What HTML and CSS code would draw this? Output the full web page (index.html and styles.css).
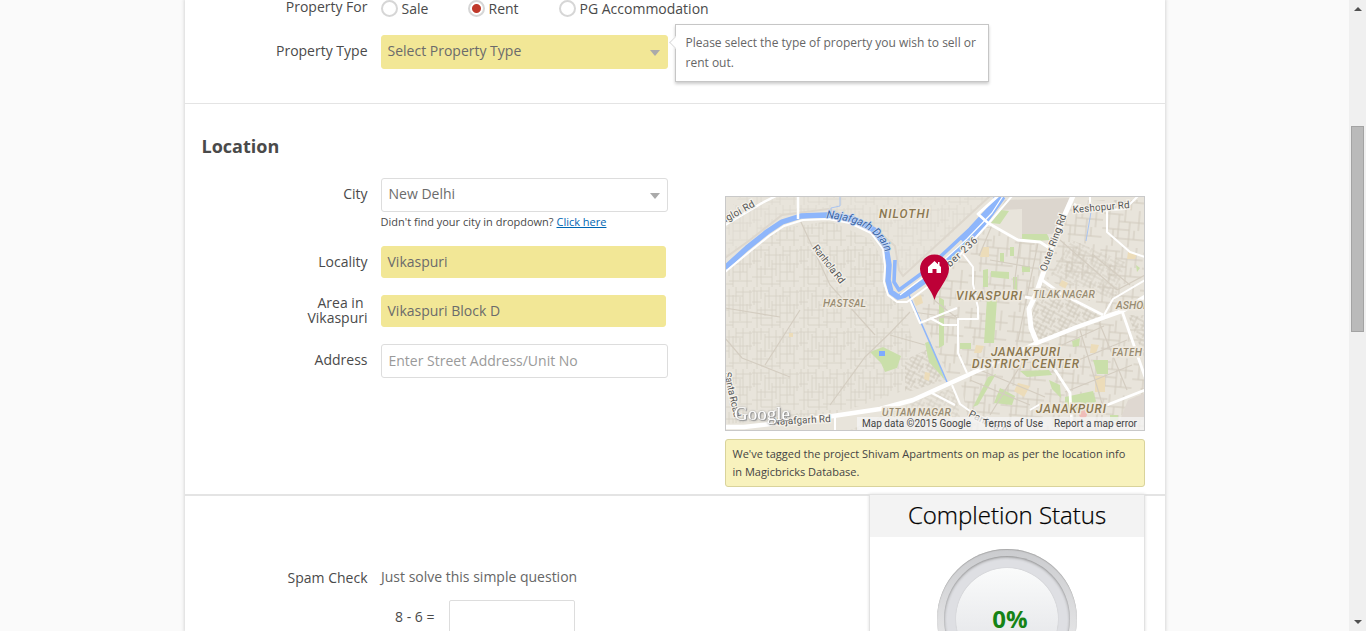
FILE: index.html
```html
<!DOCTYPE html>
<html lang="en">
<head>
<meta charset="utf-8">
<title>Post Property</title>
<link rel="stylesheet" href="styles.css">
</head>
<body>
<div class="viewport">
  <main class="page">
    <div class="card">
      <section class="section section-property">
        <div class="row row-for">
          <span class="label">Property For</span>
          <div class="radios">
            <span class="option option-sale"><i class="radio"></i>Sale</span>
            <span class="option option-rent"><i class="radio checked"></i>Rent</span>
            <span class="option"><i class="radio"></i>PG Accommodation</span>
          </div>
        </div>
        <div class="row row-type">
          <span class="label">Property Type</span>
          <div class="field select filled">Select Property Type<i class="caret"></i></div>
          <div class="tooltip">Please select the type of property you wish to sell or<br>rent out.</div>
        </div>
      </section>

      <section class="section section-location">
        <div class="form">
          <h2>Location</h2>
          <div class="row"><span class="label">City</span><div class="field select">New Delhi<i class="caret"></i></div></div>
          <p class="hint">Didn't find your city in dropdown? <a>Click here</a></p>
          <div class="row row-locality"><span class="label">Locality</span><div class="field filled short">Vikaspuri</div></div>
          <div class="row row-area"><span class="label label-two"><span class="first">Area in</span>Vikaspuri</span><div class="field filled short">Vikaspuri Block D</div></div>
          <div class="row row-address"><span class="label">Address</span><div class="field placeholder">Enter Street Address/Unit No</div></div>
        </div>
        <div class="map-column">
          <svg class="map" viewBox="725 196 420 235" width="420" height="235">
            <defs>
              <pattern id="lanes" width="47" height="41" patternUnits="userSpaceOnUse">
                <path d="M2 0V18M5 4V41M9 0V12M9 20V38M13 6V29M17 0V21M20 14V41M24 2V30M28 8V41M31 0V15M35 10V34M38 0V26M42 17V41M45 3V22M0 4H17M13 9H38M0 15H9M20 18H47M5 23H24M28 26H42M0 31H20M24 35H47M9 38H28M31 5H47" fill="none" stroke="#d6d0c5" stroke-width=".8"/>
              </pattern>
              <pattern id="blocks" width="43" height="37" patternUnits="userSpaceOnUse" patternTransform="rotate(5)">
                <path d="M0 5H20M16 12H43M0 20H27M9 29H43M6 0V20M16 5V29M27 12V37M36 0V20M11 20V37M32 20V29M22 0V12" fill="none" stroke="#d0c9bc" stroke-width="1"/>
              </pattern>
              <pattern id="dense" width="19" height="17" patternUnits="userSpaceOnUse" patternTransform="rotate(28)">
                <path d="M0 2H19M0 6H12M4 10H19M0 14H15M3 0V10M8 2V17M13 0V14M17 6V17" fill="none" stroke="#cbc4b7" stroke-width=".9"/>
              </pattern>
            </defs>
            <rect x="725" y="196" width="420" height="235" fill="#e8e4db"/>
            <path d="M725 272L748 252L782 228L830 221L872 240L885 265L886 292L902 304L913 340L900 392L836 414L725 424Z" fill="url(#lanes)"/>
            <path d="M740 196H990L940 245L900 275L897 245L865 219L820 209L780 216L725 258V215Z" fill="url(#lanes)" opacity=".6"/>
            <path d="M915 300L985 226L1050 245L1030 300L1035 342L950 380Z" fill="url(#blocks)"/>
            <path d="M960 378L1035 345L1120 314L1145 375V431H970Z" fill="url(#blocks)"/>
            <path d="M1075 200H1145V300L1110 312L1045 278L1060 230Z" fill="url(#blocks)"/>
            <path d="M1042 282L1105 315L1039 341L1030 320Z" fill="url(#dense)"/>
            <path d="M1072 240L1125 262L1115 300L1050 275Z" fill="url(#dense)" opacity=".7"/>
            <path d="M905 360L930 348L945 380L905 393Z" fill="url(#dense)"/>
            <path d="M1128 315H1145V360Z" fill="url(#dense)"/>
            <path d="M850 430L935 393L955 388L962 430Z" fill="url(#dense)" opacity=".7"/>
            <path d="M1005 200L1070 198L1059 234H1022V209L1000 210Z" fill="#dcd6ce"/>
            <path d="M1128 400L1145 393V420H1120Z" fill="#dfd8d1"/>
            <g fill="#cadfaa">
              <path d="M1001 210L1009 211L1000 224L991 223ZM1022 234H1047L1050 240L1022 242ZM983 270L988 269V287H983ZM991 271L1009 272V279L991 277ZM1010 247H1014V256H1010ZM1022 266H1030V272H1022ZM1013 277H1017V292H1013ZM1000 253H1004V262H1000ZM987 298L997 299L994 343H984ZM939 297L944 300V345L939 348ZM960 343H971V349H960ZM1136 265L1140 268L1137 272ZM870 352L883 347L901 356L897 368L885 372L881 363Z"/>
              <path d="M925 343L930 341L945 380L929 362ZM988 377L996 374L978 405L973 407ZM1000 388L1015 396L1012 405L994 403ZM1020 371L1049 370L1052 375L1027 377ZM1065 397L1093 391L1096 401L1090 414H1065ZM1072 341L1080 338L1079 346L1073 347ZM1093 360H1108V374H1097ZM1049 380L1060 385L1061 398L1052 389ZM1110 415H1118V421H1110Z"/>
            </g>
            <g fill="#ecdcb9">
              <path d="M982 247H989V257H980ZM1062 280L1068 283L1065 289L1059 285ZM1128 252L1137 254L1135 259H1127ZM913 298L921 295L923 303L916 306ZM1018 383L1030 386L1024 397L1014 391ZM1095 376H1105V392H1095ZM1091 344L1099 345L1096 353H1090ZM976 345L984 346L981 353H974ZM925 372L930 373L929 381L924 379ZM789 333H793V337H789Z"/>
            </g>
            <g fill="none" stroke="#d4cdc1" stroke-width="1.2">
              <path d="M725 338L742 358L790 377M800 220L830 285L875 335M765 365L800 310M830 405L865 357L890 333L910 312M725 308L780 317M890 335L925 345M913 312L955 318M934 300L957 318M925 320L958 315M990 260L1030 267M992 225L979 256M1020 242L1012 300M1038 243L1018 340M1060 240L1117 290M1092 254L1130 285M1117 290L1145 275"/>
              <path d="M1042 354L1104 326M1052 371L1127 340M1065 392L1132 365M1080 330L1104 410M1099 322L1127 390M1130 330H1145M1130 340H1145M1136 350H1145M970 380L1030 405M980 370L1045 397M1030 350L990 415"/>
              <path d="M725 258L750 240L782 215L828 209L870 224L895 246L899 270L903 276L990 196" stroke="#ddd7cd" stroke-width="2"/>
            </g>
            <g fill="none" stroke="#8eb6fb" stroke-linejoin="round">
              <path d="M725 268L747 248L767 232L782 222L801 216L827 215L853 219L874 230L886 247L889 265L888 280L891 292L898 297L905 295L929 278L975 234L1002 196" stroke-width="5.5"/>
              <path d="M895 260L894 282L899 290L925 271L970 229L993 204L996 196" stroke-width="3.6"/>
              <path d="M1002 196L982 224L963 242" stroke-width="8"/>
              <path d="M909 295L947 382" stroke-width="1.6"/>
              <path d="M831 217V208L840 206V196M1090 196L1091 212L1086 241" stroke-width="1" opacity=".7"/>
            </g>
            <g fill="none" stroke="#fff" stroke-linejoin="round">
              <path d="M725 272L748 253L769 236L784 226L803 220L828 219L850 223L871 233L883 249L885 267L884 282L888 295L897 302L907 302L937 280L988 224L1012 196" stroke-width="2"/>
              <path d="M900 295L933 270L967 239L992 213L1003 196" stroke-width="1.2"/>
              <path d="M725 225L762 203L776 196M798 196V219" stroke-width="2.5"/>
              <path d="M725 427H744L787 422L833 416L880 409L913 400L935 390L957 380L990 365L1037 343L1077 327L1122 311L1145 297" stroke-width="4.5"/>
              <path d="M1073 196L1062 221L1053 242L1044 271L1036 294L1029 309L1031 328L1037 343" stroke-width="5"/>
              <path d="M998 196L978 214L988 223L1018 240L1040 242L1051 249M1103 315L1060 293L1042 280M1122 311L1145 377M1107 405L1145 390M1047 358L1057 373L1070 393L1072 431M1025 297L1036 299" stroke-width="2.8"/>
              <path d="M952 385L960 404L977 416L1008 431M910 300L920 323L957 308M963 254L973 267V284L978 308V319H958V353L967 373M930 318L943 325H958M1074 204L1090 211L1125 209L1138 196M1107 211V232L1130 252L1145 257M1104 315L1113 299L1145 280M1090 196V205M930 392L955 405M835 415V431M1030 410L1042 403" stroke-width="2"/>
            </g>
            <rect x="879" y="351" width="6" height="5" fill="#7eaaff"/>
            <circle cx="1083" cy="414" r="4" fill="#efbdb8"/>
            <g class="place">
              <text x="879" y="218" textLength="50">NILOTHI</text>
              <text x="956" y="300" textLength="66">VIKASPURI</text>
              <text x="991" y="355.500" textLength="69">JANAKPURI</text>
              <text x="972" y="367.500" textLength="107">DISTRICT CENTER</text>
              <text x="1036" y="412.500" textLength="70">JANAKPURI</text>
            </g>
            <g class="place minor">
              <text x="823" y="307" textLength="43">HASTSAL</text>
              <text x="1033" y="298" textLength="62">TILAK NAGAR</text>
              <text x="1116" y="309">ASHOK</text>
              <text x="1112" y="356" textLength="30">FATEH</text>
              <text x="882" y="416" textLength="69">UTTAM NAGAR</text>
            </g>
            <g class="road">
              <text transform="translate(723 224) rotate(-29)" textLength="37">ngloi Rd</text>
              <text transform="translate(812 248) rotate(52)" textLength="46">Ranhola Rd</text>
              <text transform="translate(1046 272) rotate(-70)" textLength="60">Outer Ring Rd</text>
              <text transform="translate(1073 213) rotate(-5)" textLength="57">Keshopur Rd</text>
              <text transform="translate(943 274) rotate(-43)" textLength="48">mber 236</text>
              <text transform="translate(773 425) rotate(-3)" textLength="58">Najafgarh Rd</text>
              <text transform="translate(724 373) rotate(77)" textLength="46">Santa Road</text>
              <text transform="translate(968 416) rotate(27)">Pankha R</text>
            </g>
            <path id="drain" d="M826 218Q878 222 886 255" fill="none"/>
            <text class="drain"><textPath href="#drain" textLength="73">Najafgarh Drain</textPath></text>
            <text class="brand" x="734" y="420" textLength="56">Google</text>
            <path d="M934.500 300C932 290 920 279 920 269A14.500 14.500 0 0 1 949 269C949 279 937 290 934.500 300Z" fill="#bd0037"/>
            <path d="M934.500 261L928 267V273H932.500V269H936.500V273H941V267L939.500 265.600V262H938V264.200Z" fill="#fff"/>
            <rect x="857" y="417" width="288" height="14" fill="#f5f5f5" opacity=".76"/>
            <g class="legal">
              <text x="862" y="427" textLength="109">Map data ©2015 Google</text>
              <text x="983" y="427" textLength="60">Terms of Use</text>
              <text x="1054" y="427" textLength="83">Report a map error</text>
            </g>
            <rect x="725.500" y="196.500" width="419" height="234" fill="none" stroke="#c9c9c9"/>
          </svg>
          <div class="notice">We've tagged the project Shivam Apartments on map as per the location info<br>in Magicbricks Database.</div>
        </div>
      </section>

      <section class="section-check">
        <div class="spam">
          <div class="row row-spam"><span class="label">Spam Check</span><span class="question">Just solve this simple question</span></div>
          <div class="sum"><span>8 - 6 =</span><div class="answer"></div></div>
        </div>
        <aside class="status">
          <h3>Completion Status</h3>
          <div class="dial"><div class="ring"><div class="face">0%</div></div></div>
        </aside>
      </section>
    </div>
  </main>
  <div class="scrollbar">
    <i class="arrow up"></i>
    <i class="thumb"></i>
    <i class="arrow down"></i>
  </div>
</div>
</body>
</html>
```
FILE: styles.css
```css
* { box-sizing: border-box; }
body { margin: 0; background: #fafafa; color: #4a4a4a; font: 14px/20px "Open Sans", sans-serif; overflow: hidden; }
.viewport { display: flex; height: 631px; overflow: hidden; }
.page { flex: 1; height: 631px; overflow: hidden; padding-left: 185px; }
.card { width: 980px; height: 631px; background: #fff; box-shadow: 0 0 3px 1px #d8d8d8; }

.section-property { height: 104px; border-bottom: 1px solid #e4e4e4; }
.row { display: flex; align-items: flex-start; }
.label { width: 182.5px; margin-right: 13.5px; text-align: right; white-space: nowrap; }
.row-for { height: 35px; }
.row-for .label { margin-top: -3px; }
.radios { display: flex; margin-top: -1px; }
.option { display: flex; align-items: center; gap: 3.500px; white-space: nowrap; }
.option-sale { width: 87px; }
.option-rent { width: 91px; }
.radio { width: 17px; height: 17px; margin-top: -2px; border: 2px solid #d6d6d6; border-radius: 50%; background: #fff; }
.radio.checked { background: radial-gradient(circle, #c0392b 4px, #fff 5px); }
.row-type .label { margin-top: 6px; }

.field { display: flex; align-items: center; width: 287px; height: 34px; padding: 0 6.500px 2px; border: 1px solid #ddd; border-radius: 3px; background: #fff; color: #6b6b6b; white-space: nowrap; }
.field.select { justify-content: space-between; }
.field.filled { background: #f2e796; border-color: #f2e796; padding-left: 5.500px; }
.field.short { width: 285px; height: 32px; padding-bottom: 0; }
.field.placeholder { color: #9a9a9a; padding-bottom: 0; }
.caret { width: 0; height: 0; margin-top: 3px; border: 5.500px solid transparent; border-top: 6px solid #aaa; border-bottom-width: 0; margin-right: 1px; }

.tooltip { position: relative; width: 314px; height: 58px; margin: -11px 0 0 7px; padding: 8px 9.500px; border: 1px solid #c6c6c6; background: #fff; box-shadow: 0 2px 3px #ccc; color: #666; font-size: 12px; white-space: nowrap; }
.tooltip::before { content: ""; position: absolute; left: -5px; top: 13px; width: 8px; height: 8px; background: #fff; border: 1px solid #ddd; border-width: 0 0 1px 1px; transform: rotate(45deg); }

.section-location { display: flex; height: 392px; border-bottom: 2px solid #e4e4e4; }
.form { width: 540px; }
h2 { margin: 30px 0 20px 16.500px; font-size: 18px; line-height: 24px; }
.form .label { margin-top: 6px; }
.hint { margin: 2px 0 16px 195.500px; font-size: 11px; line-height: 16px; white-space: nowrap; }
.hint a { color: #0066b3; text-decoration: underline; }
.row-locality { height: 49px; }
.row-area { height: 49px; }
.form .label-two { margin-top: 0; line-height: 15px; }
.label-two .first { display: block; padding-right: 4px; }

.map-column { width: 420px; padding-top: 92px; }
.map { display: block; font-family: Roboto, sans-serif; }
.place { font-size: 12px; font-weight: 500; font-style: italic; fill: #8a7750; stroke: #eee9df; stroke-width: 3px; paint-order: stroke; }
.minor { font-size: 10.500px; fill: #998c72; }
.road { font-size: 10px; fill: #555; stroke: #f4f1ea; stroke-width: 2.500px; paint-order: stroke; }
.drain { font-size: 11px; font-style: italic; fill: #3c65a4; stroke: #c7d9f5; stroke-width: 1.500px; paint-order: stroke; }
.brand { font: 19px "Liberation Serif", serif; fill: #fff; filter: drop-shadow(1px 1px 0 #999) drop-shadow(0 0 1px #aaa); }
.legal { font-size: 10px; fill: #444; }
.notice { height: 48px; margin-top: 8px; padding: 5px 6.500px; border: 1px solid #d9d39b; border-radius: 3px; background: #f8f2bd; color: #444; font-size: 11px; line-height: 18px; white-space: nowrap; }

.section-check { display: flex; align-items: flex-start; height: 135px; }
.spam { width: 684px; padding-top: 71px; }
.row-spam .label { margin-top: 1px; }
.question { color: #666; }
.sum { display: flex; margin: 12px 0 0 210px; }
.sum span { width: 54px; margin-top: 7px; white-space: nowrap; }
.answer { width: 126px; height: 34px; border: 1px solid #ddd; border-radius: 2px; }
.status { width: 276px; height: 150px; margin-top: -2px; border: 1px solid #e2e2e2; background: #fff; box-shadow: 0 0 3px #ddd; }
h3 { height: 42px; margin: 0; background: #f3f3f3; color: #000; font-size: 24px; font-weight: 300; line-height: 40px; text-align: center; white-space: nowrap; -webkit-text-stroke: .25px #000; }
.dial { width: 140px; height: 140px; margin: 12px auto 0; padding: 7px; border-radius: 50%; background: linear-gradient(#cbcccf, #e7e7e8 70%); box-shadow: inset 0 1px 1px #aaa; }
.ring { width: 126px; height: 126px; padding: 12px; border-radius: 50%; background: #dedfe3; box-shadow: inset 0 1px 3px #888; }
.face { width: 102px; height: 102px; padding-left: 6px; border-radius: 50%; background: linear-gradient(#fafbfb, #dfe0e4); box-shadow: 0 0 1px #aaa; color: #168316; font-size: 24px; font-weight: 700; line-height: 101px; text-align: center; }

.scrollbar { display: flex; flex-direction: column; align-items: center; width: 17px; height: 631px; background: #f0f0f0; }
.thumb { width: 13px; height: 206px; margin-top: 115px; border: 1px solid #a3a3a3; background: #bababa; }
.arrow { width: 0; height: 0; border: 4px solid transparent; }
.up { margin-top: 7px; border-top-width: 0; border-bottom-color: #505050; }
.down { margin-top: auto; margin-bottom: 7px; border-bottom-width: 0; border-top-color: #505050; }
```
